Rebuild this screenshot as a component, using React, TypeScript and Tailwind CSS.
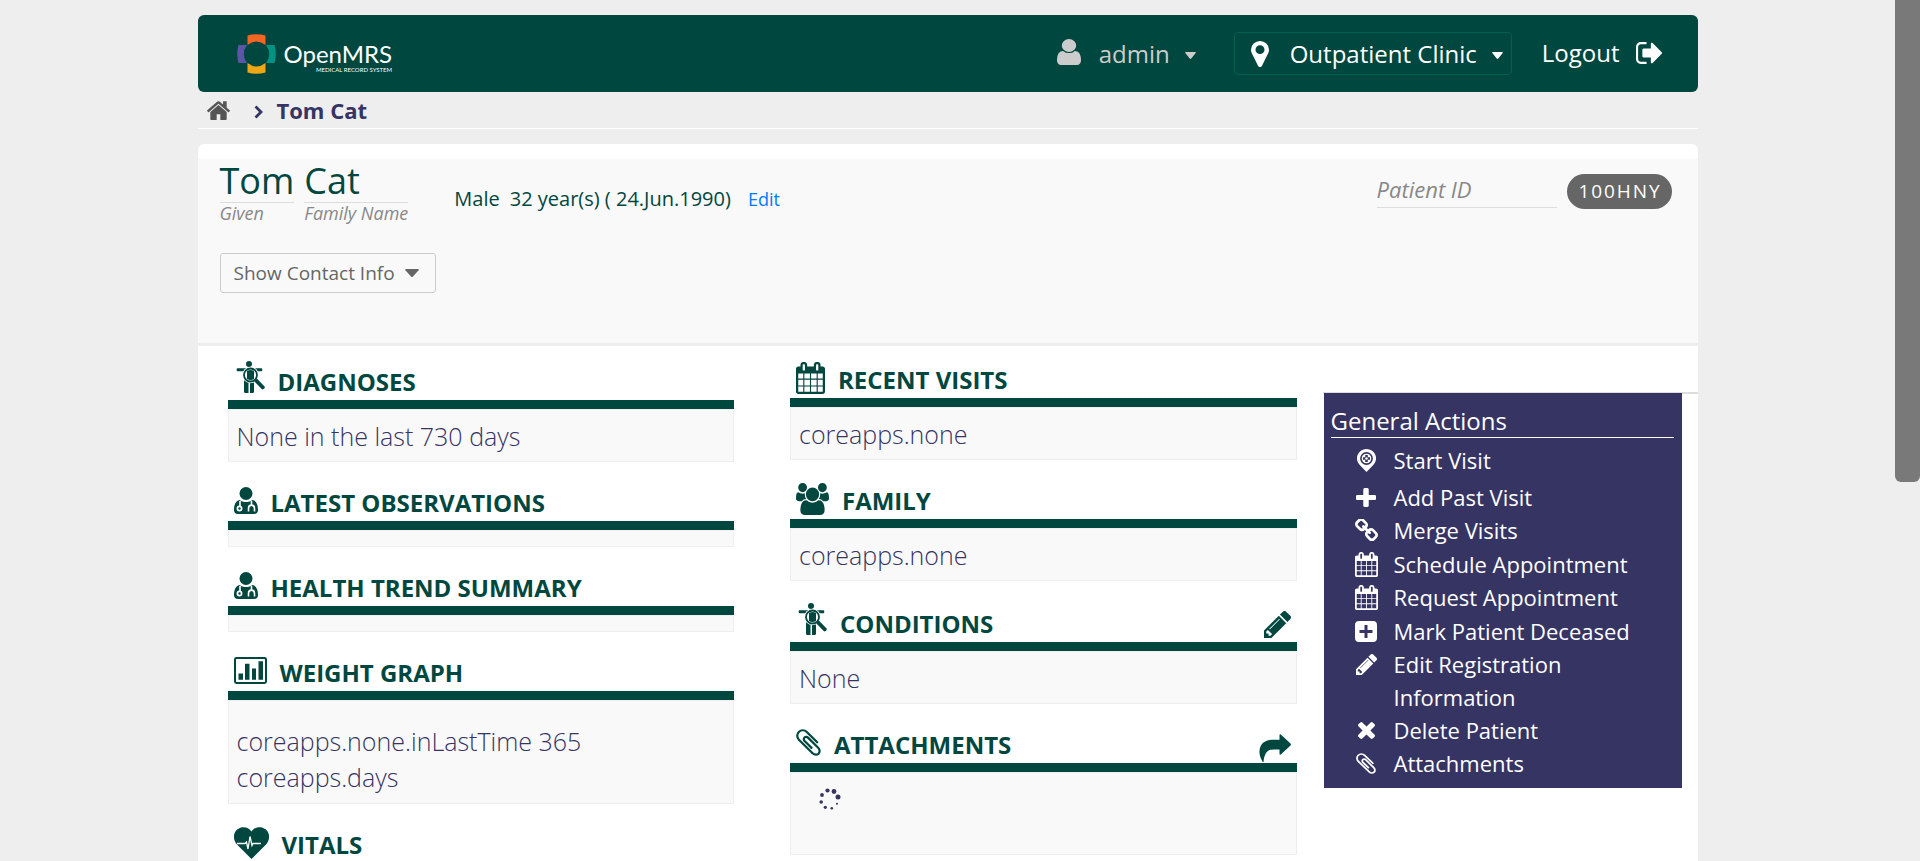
import React from "react";

type IconProps = { className?: string };
const svg = (viewBox: string, body: React.ReactNode) =>
  function Icon({ className = "" }: IconProps) {
    return (
      <svg viewBox={viewBox} className={`block shrink-0 ${className}`} fill="currentColor" aria-hidden="true" preserveAspectRatio="none">
        {body}
      </svg>
    );
  };

const HomeIcon = svg("86 242 1620 1294", <path d="M1472 992v480q0 26-19 45t-45 19h-384v-384h-256v384h-384q-26 0-45-19t-19-45v-480q0-1 .5-3t.5-3l575-474 575 474q1 2 1 6zm223-69l-62 74q-8 9-21 11h-3q-13 0-21-7l-692-577-692 577q-12 8-24 7-13-2-21-11l-62-74q-8-10-7-23.5t11-21.5l719-599q32-26 76-26t76 26l244 204v-195q0-14 9-23t23-9h192q14 0 23 9t9 23v408l219 182q10 8 11 21.5t-7 23.5z" />);
const CalendarIcon = svg("64 0 1664 1792", <path d="M192 1664h288v-288h-288v288zm352 0h320v-288h-320v288zm-352-352h288v-320h-288v320zm352 0h320v-320h-320v320zm-352-384h288v-288h-288v288zm736 736h320v-288h-320v288zm-384-736h320v-288h-320v288zm768 736h288v-288h-288v288zm-384-352h320v-320h-320v320zm-352-864v-288q0-13-9.5-22.5t-22.5-9.5h-64q-13 0-22.5 9.5t-9.5 22.5v288q0 13 9.5 22.5t22.5 9.5h64q13 0 22.5-9.5t9.5-22.5zm736 864h288v-320h-288v320zm-384-384h320v-288h-320v288zm384 0h288v-288h-288v288zm32-480v-288q0-13-9.5-22.5t-22.5-9.5h-64q-13 0-22.5 9.5t-9.5 22.5v288q0 13 9.5 22.5t22.5 9.5h64q13 0 22.5-9.5t9.5-22.5zm384-64v1280q0 52-38 90t-90 38h-1408q-52 0-90-38t-38-90v-1280q0-52 38-90t90-38h128v-96q0-66 47-113t113-47h64q66 0 113 47t47 113v96h384v-96q0-66 47-113t113-47h64q66 0 113 47t47 113v96h128q52 0 90 38t38 90z" />);
const GroupIcon = svg("64 0 1920 1792", <path d="M657 896q-162 5-265 128h-134q-82 0-138-40.5t-56-118.5q0-353 124-353 6 0 43.5 21t97.5 42.5 119 21.5q67 0 133-23-5 37-5 66 0 139 81 256zm1071 637q0 120-73 189.5t-194 69.5h-874q-121 0-194-69.5t-73-189.5q0-53 3.5-103.5t14-109 26.5-108.5 43-97.5 62-81 85.5-53.5 111.5-20q10 0 43 21.5t73 48 107 48 135 21.5 135-21.5 107-48 73-48 43-21.5q61 0 111.5 20t85.5 53.5 62 81 43 97.5 26.5 108.5 14 109 3.5 103.5zm-1024-1277q0 106-75 181t-181 75-181-75-75-181 75-181 181-75 181 75 75 181zm704 384q0 159-112.5 271.5t-271.5 112.5-271.5-112.5-112.5-271.5 112.5-271.5 271.5-112.5 271.5 112.5 112.5 271.5zm576 225q0 78-56 118.5t-138 40.5h-134q-103-123-265-128 81-117 81-256 0-29-5-66 66 23 133 23 59 0 119-21.5t97.5-42.5 43.5-21q124 0 124 353zm-128-609q0 106-75 181t-181 75-181-75-75-181 75-181 181-75 181 75 75 181z" />);
const PencilIcon = svg("128 150 1515 1514", <path d="M491 1536l91-91-235-235-91 91v107h128v128h107zm523-928q0-22-22-22-10 0-17 7l-542 542q-7 7-7 17 0 22 22 22 10 0 17-7l542-542q7-7 7-17zm-54-192l416 416-832 832h-416v-416zm683 96q0 53-37 90l-166 166-416-416 166-165q36-38 90-38 53 0 91 38l235 234q37 39 37 91z" />);
const ClipIcon = svg("190 120 1420 1550", <path d="M1596 1385q0 117-79 196t-196 79q-135 0-235-100l-777-776q-113-115-113-271 0-159 110-270t269-111q158 0 273 113l605 606q10 10 10 22 0 16-30.5 46.5t-46.5 30.5q-13 0-23-10l-606-607q-79-77-181-77-106 0-179 75t-73 181q0 105 76 181l776 777q63 63 145 63 64 0 106-42t42-106q0-82-63-145l-581-581q-26-24-60-24-29 0-48 19t-19 48q0 32 25 59l410 410q10 10 10 22 0 16-31 47t-47 31q-12 0-22-10l-410-410q-63-61-63-149 0-82 57-139t139-57q88 0 149 63l581 581q100 98 100 235z" />);
const PlusIcon = svg("192 128 1408 1408", <path d="M1600 736v192q0 40-28 68t-68 28h-416v416q0 40-28 68t-68 28h-192q-40 0-68-28t-28-68v-416h-416q-40 0-68-28t-28-68v-192q0-40 28-68t68-28h416v-416q0-40 28-68t68-28h192q40 0 68 28t28 68v416h416q40 0 68 28t28 68z" />);
const LinkIcon = svg("80 80 1632 1632", <path d="M1520 1216q0-40-28-68l-208-208q-28-28-68-28-42 0-72 32 3 3 19 18.5t21.5 21.5 15 19 13 25.5 3.5 27.5q0 40-28 68t-68 28q-15 0-27.5-3.5t-25.5-13-19-15-21.5-21.5-18.5-19q-33 31-33 73 0 40 28 68l206 207q27 27 68 27 40 0 68-26l147-146q28-28 28-67zm-703-705q0-40-28-68l-206-207q-28-28-68-28-39 0-68 27l-147 146q-28 28-28 67 0 40 28 68l208 208q27 27 68 27 42 0 72-31-3-3-19-18.5t-21.5-21.5-15-19-13-25.5-3.5-27.5q0-40 28-68t68-28q15 0 27.5 3.5t25.5 13 19 15 21.5 21.5 18.5 19q33-31 33-73zm895 705q0 120-85 203l-147 146q-83 83-203 83-121 0-204-85l-206-207q-83-83-83-203 0-123 88-209l-88-88q-86 88-208 88-120 0-204-84l-208-208q-84-84-84-204t85-203l147-146q83-83 203-83 121 0 204 85l206 207q83 83 83 203 0 123-88 209l88 88q86-88 208-88 120 0 204 84l208 208q84 84 84 204z" />);
const TimesIcon = svg("302 366 1188 1188" , <path d="M1490 1322q0 40-28 68l-136 136q-28 28-68 28t-68-28l-294-294-294 294q-28 28-68 28t-68-28l-136-136q-28-28-28-68t28-68l294-294-294-294q-28-28-28-68t28-68l136-136q28-28 68-28t68 28l294 294 294-294q28-28 68-28t68 28l136 136q28 28 28 68t-28 68l-294 294 294 294q28 28 28 68z" />);
const UserIcon = svg("256 128 1280 1536", <path d="M1536 1399q0 109-62.5 187t-150.5 78h-854q-88 0-150.5-78t-62.5-187q0-85 8.5-160.5t31.5-152 58.5-131 94-89 134.5-34.5q131 128 313 128t313-128q76 0 134.5 34.5t94 89 58.5 131 31.5 152 8.5 160.5zm-256-887q0 159-112.5 271.5t-271.5 112.5-271.5-112.5-112.5-271.5 112.5-271.5 271.5-112.5 271.5 112.5 112.5 271.5z" />);
const MarkerIcon = svg("384 128 1024 1536", <path d="M1152 640q0-106-75-181t-181-75-181 75-75 181 75 181 181 75 181-75 75-181zm256 0q0 109-33 179l-364 774q-16 33-47.5 52t-67.5 19-67.5-19-46.5-52l-365-774q-33-70-33-179 0-212 150-362t362-150 362 150 150 362z" />);
const SignOutIcon = svg("64 256 1568 1280", <path d="M704 1440q0 4 1 20t.5 26.5-3 23.5-10 19.5-20.5 6.5h-320q-119 0-203.5-84.5t-84.5-203.5v-704q0-119 84.5-203.5t203.5-84.5h320q13 0 22.5 9.5t9.5 22.5q0 4 1 20t.5 26.5-3 23.5-10 19.5-20.5 6.5h-320q-66 0-113 47t-47 113v704q0 66 47 113t113 47h312l11.5 1 11.5 3 8 5.5 7 9 2 13.5zm928-544q0 26-19 45l-544 544q-19 19-45 19t-45-19-19-45v-288h-448q-26 0-45-19t-19-45v-384q0-26 19-45t45-19h448v-288q0-26 19-45t45-19 45 19l544 544q19 19 19 45z" />);
const ShareIcon = svg("0 0 32 28", <path d="M20.500 1.200Q20.600-.4 21.800.6L31.500 9.600Q32.300 10.500 31.500 11.400L21.800 20.400Q20.600 21.400 20.500 19.800V15.500H14.500C8.500 15.500 5.500 19 4.500 28H3.700C1 23.500.3 20.500.5 17 1 9 7 5.800 14 5.800H20.500z" />);
const CaretIcon = svg("0 0 14 8", <path d="M1 0h12q1.500 0 .6 1.200L8 7.400q-1 1-2 0L.4 1.200Q-.5 0 1 0z" />);
const ChevronIcon = svg("0 0 9 14", <path d="M1.500 1.500 7 7l-5.500 5.500" fill="none" stroke="currentColor" strokeWidth="2.800" />);
const BarChartIcon = svg("0 0 33 28", <>
  <rect x="1" y="1" width="31" height="26" rx="1.500" fill="none" stroke="currentColor" strokeWidth="2" />
  <path d="M4.500 17h4.500v6.500H4.500zM11 7h4.500v16.500H11zM18 12h4v11.500h-4zM24.500 4.500H29v19h-4.500z" />
</>);
const HeartIcon = svg("0 0 35 32", <>
  <path d="M17.500 32 3 17.500C-1.500 12.500-.8 5.500 3.500 2.200 8-1.200 14.500-.2 17.500 4.500 20.500-.2 27-1.200 31.500 2.200c4.300 3.300 5 10.300.5 15.300z" />
  <path d="M3 16.500h8l1.500-1.500 1.500 7 2-12.500 2 9 1-2h8" fill="none" stroke="#fff" strokeWidth="1.300" />
</>);
const DoctorIcon = svg("0 0 24 27", <>
  <ellipse cx="12" cy="6.500" rx="6.500" ry="6.500" />
  <path d="M5.500 13c2 1.500 4 2 6.500 2s4.500-.5 6.500-2c4 1 5.500 5 5.500 10 0 2.500-1.500 4-4 4h-16c-2.500 0-4-1.500-4-4 0-5 1.500-9 5.500-10z" />
  <path d="M6 14v6M17.500 14v4M14.500 24.500v-3c0-4.500 6-4.500 6 0v3" fill="none" stroke="#fff" strokeWidth="1.600" />
  <circle cx="5.500" cy="21.500" r="2.100" fill="none" stroke="#fff" strokeWidth="1.700" />
</>);
const DiagnosisIcon = svg("0 0 29 32", <>
  <circle cx="13" cy="3" r="3" />
  <path d="M1.300 7.200h24.400q1.300 1.500 0 3H1.300q-1.500-1.500 0-3zM8 9h10v21.500q0 1.500-1.500 1.500h-2.500V22h-1.500v10H9.500Q8 32 8 30.500z" />
  <circle cx="14.500" cy="14" r="8.300" fill="#fff" />
  <circle cx="14.500" cy="14" r="6.500" fill="none" stroke="currentColor" strokeWidth="1.800" />
  <path d="M11 10q3.500-1.800 7 0v8q-3.500 2-7 0zM18.200 20.200l2.600-2.600 8 8.200q.3 2.400-2.600 2.600z" />
</>);
const StartIcon = svg("0 0 19 23", <>
  <path d="M9.500 23 3 16.200C-1 12-1 6.500 2.800 2.800s9.600-3.700 13.400 0S20 12 16 16.200z" />
  <circle cx="9.500" cy="9.500" r="5.600" fill="none" stroke="#363463" strokeWidth="1.600" />
  <path d="M9.500 6v7M6 9.500h7" stroke="#363463" strokeWidth="2.600" />
  <circle cx="9.500" cy="9.500" r="1.300" />
</>);
const PlusSquareIcon = svg("0 0 22 21", <path fillRule="evenodd" d="M4 0h14q4 0 4 4v13q0 4-4 4H4q-4 0-4-4V4Q0 0 4 0zM9.500 4v5H4.500v3h5v5h3v-5h5V9h-5V4z" />);
const SpinnerIcon = svg("0 0 22 22", <>
  <circle cx="8.500" cy="2.500" r="2.100" /><circle cx="15" cy="3.500" r="2.400" /><circle cx="19" cy="9" r="2.500" />
  <circle cx="3" cy="7" r="1.900" /><circle cx="2.200" cy="14" r="1.800" /><circle cx="6.300" cy="19.300" r="1.600" />
  <circle cx="12.800" cy="20.300" r="1.300" /><circle cx="18" cy="15.800" r="1" />
</>);
const LogoMark = svg("0 0 39 40", <>
  <path d="M10.500 1.500q9-2.500 18 0V11q-9-7-18 0z" fill="#f26522" />
  <path d="M10.500 38.500q9 2.500 18 0V29q-9 7-18 0z" fill="#eea616" />
  <path d="M1.500 11q-2.500 9 0 18H10q-6.500-9 0-18z" fill="#5b57a6" />
  <path d="M37.500 11q2.500 9 0 18H29q6.500-9 0-18z" fill="#009384" />
</>);

type SectionProps = {
  icon: React.ReactNode;
  title: string;
  tall?: boolean;
  action?: React.ReactNode;
  bodyClass?: string;
  children?: React.ReactNode;
};

function Section({ icon, title, tall, action, bodyClass = "p-2 pb-[7px]", children }: SectionProps) {
  return (
    <section className="mb-[21px]">
      <header className={`flex items-end justify-between border-b-[9px] border-[#00473f] px-1.5 text-[#00473f] ${tall ? "h-[49px]" : "h-[47px]"}`}>
        <div className="flex items-end gap-[13px]">
          {icon}
          <h3 className="text-2xl leading-9 font-bold uppercase">{title}</h3>
        </div>
        {action}
      </header>
      <div className={`border border-[#eee] bg-[#f9f9f9] text-[25px] leading-9 font-light text-[#363463] ${bodyClass}`}>{children}</div>
    </section>
  );
}

const actions = [
  { label: "Start Visit", icon: <StartIcon className="h-[23px] w-[19px]" />, row: "pb-1" },
  { label: "Add Past Visit", icon: <PlusIcon className="h-[19px] w-5" />, row: "" },
  { label: "Merge Visits", icon: <LinkIcon className="h-[23px] w-[23px]" />, row: "pb-px" },
  { label: "Schedule Appointment", icon: <CalendarIcon className="h-[25px] w-[23px]" />, row: "" },
  { label: "Request Appointment", icon: <CalendarIcon className="h-[25px] w-[23px]" />, row: "pb-px" },
  { label: "Mark Patient Deceased", icon: <PlusSquareIcon className="h-[21px] w-[22px]" />, row: "" },
  { label: "Edit Registration Information", icon: <PencilIcon className="size-[21px]" />, row: "" },
  { label: "Delete Patient", icon: <TimesIcon className="size-[17px]" />, row: "" },
  { label: "Attachments", icon: <ClipIcon className="h-[21px] w-5" />, row: "" },
];

export default function App() {
  return (
    <div className="flex h-screen overflow-hidden bg-[#eee] font-['Open_Sans','Noto_Sans',sans-serif] text-[#363463]">
      <div className="min-w-0 flex-1 overflow-hidden">
        <div className="mx-auto max-w-[1500px] pt-[15px]">
          <header className="flex h-[77px] items-center justify-between rounded-md bg-[#00473f] pr-9 pl-[39px] text-2xl text-white">
            <a href="#home" aria-label="OpenMRS Medical Record System" className="flex items-center gap-2">
              <LogoMark className="h-10 w-[39px]" />
              <span className="flex flex-col items-end pt-2.5 font-[Lato,sans-serif]">
                <span className="text-2xl leading-5">OpenMRS</span>
                <span className="pt-0.5 text-[6px] leading-2">MEDICAL RECORD SYSTEM</span>
              </span>
            </a>
            <nav className="flex items-center">
              <button className="flex items-center text-[#ccc]">
                <UserIcon className="mr-[18px] mb-1 h-[26px] w-6" />
                admin
                <CaretIcon className="mt-1 ml-[15px] h-[7px] w-[11px]" />
              </button>
              <button className="ml-[38px] flex h-[43px] items-center rounded border border-[#005f50] pr-2 pl-4">
                <MarkerIcon className="mr-[21px] h-[26px] w-[18px]" />
                Outpatient Clinic
                <CaretIcon className="mt-1 ml-[15px] h-[7px] w-[11px]" />
              </button>
              <a href="#logout" className="ml-[30px] flex items-center gap-4 pb-0.5">
                Logout
                <SignOutIcon className="h-[22px] w-[26px]" />
              </a>
            </nav>
          </header>

          <nav aria-label="Breadcrumb" className="flex h-[37px] items-center border-b border-white pl-[9px]">
            <a href="#home" aria-label="Home" className="text-[#555]">
              <HomeIcon className="h-[19px] w-[23px]" />
            </a>
            <ChevronIcon className="mt-1 mr-3.5 ml-6 h-3.5 w-[9px]" />
            <span className="text-[22px] leading-8 font-bold">Tom Cat</span>
          </nav>

          <main className="mt-[15px] rounded-t-md bg-white pt-[15px]">
            <div className="flex h-[187px] items-start justify-between border-b-[3px] border-[#eee] bg-[#f9f9f9] pr-[26px] pl-[22px] text-[#00473f]">
              <div>
                <div className="flex">
                  <h1 className="flex gap-2.5 text-4xl">
                    <span>
                      <span className="block h-11 border-b border-[#ddd] leading-[44px]">Tom</span>
                      <em className="block text-lg leading-[21px] text-[#888]">Given</em>
                    </span>
                    <span>
                      <span className="block h-11 border-b border-[#ddd] leading-[44px]">Cat</span>
                      <em className="block text-lg leading-[21px] text-[#888]">Family Name</em>
                    </span>
                  </h1>
                  <div className="ml-[46px] flex items-baseline pt-[25px] text-xl leading-[30px]">
                    <span className="mr-2.5">Male</span>
                    <span>32 year(s) ( 24.Jun.1990)</span>
                    <a href="#edit" className="ml-[17px] text-lg text-[#007bff]">Edit</a>
                  </div>
                </div>
                <button className="mt-[29px] flex h-10 items-center rounded-[3px] border border-[#ccc] px-[13px] pr-4 text-[19px] text-[#666]">
                  Show Contact Info
                  <CaretIcon className="ml-2.5 h-2 w-3.5" />
                </button>
              </div>
              <div className="flex gap-2.5 pt-[15px]">
                <em className="h-[34px] w-[180px] border-b border-[#ddd] text-[22px] leading-[30px] text-[#888]">Patient ID</em>
                <span className="h-[35px] rounded-full bg-[#666] pr-2.5 pl-3 text-[19px] leading-[35px] tracking-widest text-white">100HNY</span>
              </div>
            </div>

            <div className="flex items-start">
              <div className="grid min-w-0 flex-1 grid-cols-2 gap-14 pt-[14px] pl-[30px]">
                <div>
                  <Section tall title="Diagnoses" icon={<DiagnosisIcon className="mb-[7px] ml-0.5 h-8 w-[29px]" />}>None in the last 730 days</Section>
                  <Section title="Latest Observations" icon={<DoctorIcon className="mb-[7px] h-[27px] w-6" />} />
                  <Section title="Health Trend Summary" icon={<DoctorIcon className="mb-[7px] h-[27px] w-6" />} />
                  <Section title="Weight Graph" icon={<BarChartIcon className="mb-[7px] h-[27px] w-[33px]" />} bodyClass="px-2 pt-[22px] pb-2">
                    coreapps.none.inLastTime 365
                    <br />
                    coreapps.days
                  </Section>
                  <Section title="Vitals" icon={<HeartIcon className="mb-1 h-8 w-[35px]" />} />
                </div>
                <div>
                  <Section title="Recent Visits" icon={<CalendarIcon className="mb-1 h-8 w-[29px]" />}>coreapps.none</Section>
                  <Section title="Family" icon={<GroupIcon className="mb-1 h-8 w-[33px]" />}>coreapps.none</Section>
                  <Section
                    tall
                    title="Conditions"
                    icon={<DiagnosisIcon className="mb-[7px] ml-0.5 h-8 w-[29px]" />}
                    action={<a href="#conditions" aria-label="Edit conditions" className="mb-1"><PencilIcon className="size-[27px]" /></a>}
                  >
                    None
                  </Section>
                  <Section
                    title="Attachments"
                    icon={<ClipIcon className="mb-[7px] h-[27px] w-[25px]" />}
                    action={<a href="#attachments" aria-label="Open attachments" className="mb-px"><ShareIcon className="h-7 w-8" /></a>}
                    bodyClass="h-[83px] px-7 py-[15px]"
                  >
                    <SpinnerIcon className="size-[22px]" />
                  </Section>
                </div>
              </div>
              <aside className="mt-[46px] ml-[26px] border-t-2 border-[#ddd] pr-4 pl-px">
                <div className="-mt-px w-[358px] bg-[#363463] px-2 pt-3 pb-2 pl-[7px] text-white">
                  <h2 className="border-b border-white text-2xl leading-8">General Actions</h2>
                  <ul className="pt-1.5 text-[22px] leading-[33px]">
                    {actions.map((a) => (
                      <li key={a.label} className={a.row}>
                        <a href="#action" className="flex items-start pl-6">
                          <span className="mr-4 flex h-[33px] w-[23px] items-center justify-center">{a.icon}</span>
                          <span className="min-w-0 flex-1 pr-8">{a.label}</span>
                        </a>
                      </li>
                    ))}
                  </ul>
                </div>
              </aside>
            </div>
          </main>
        </div>
      </div>
      <div className="w-[25px] shrink-0" aria-hidden="true">
        <div className="h-[56%] rounded-b-md bg-[#797979]" />
      </div>
    </div>
  );
}
